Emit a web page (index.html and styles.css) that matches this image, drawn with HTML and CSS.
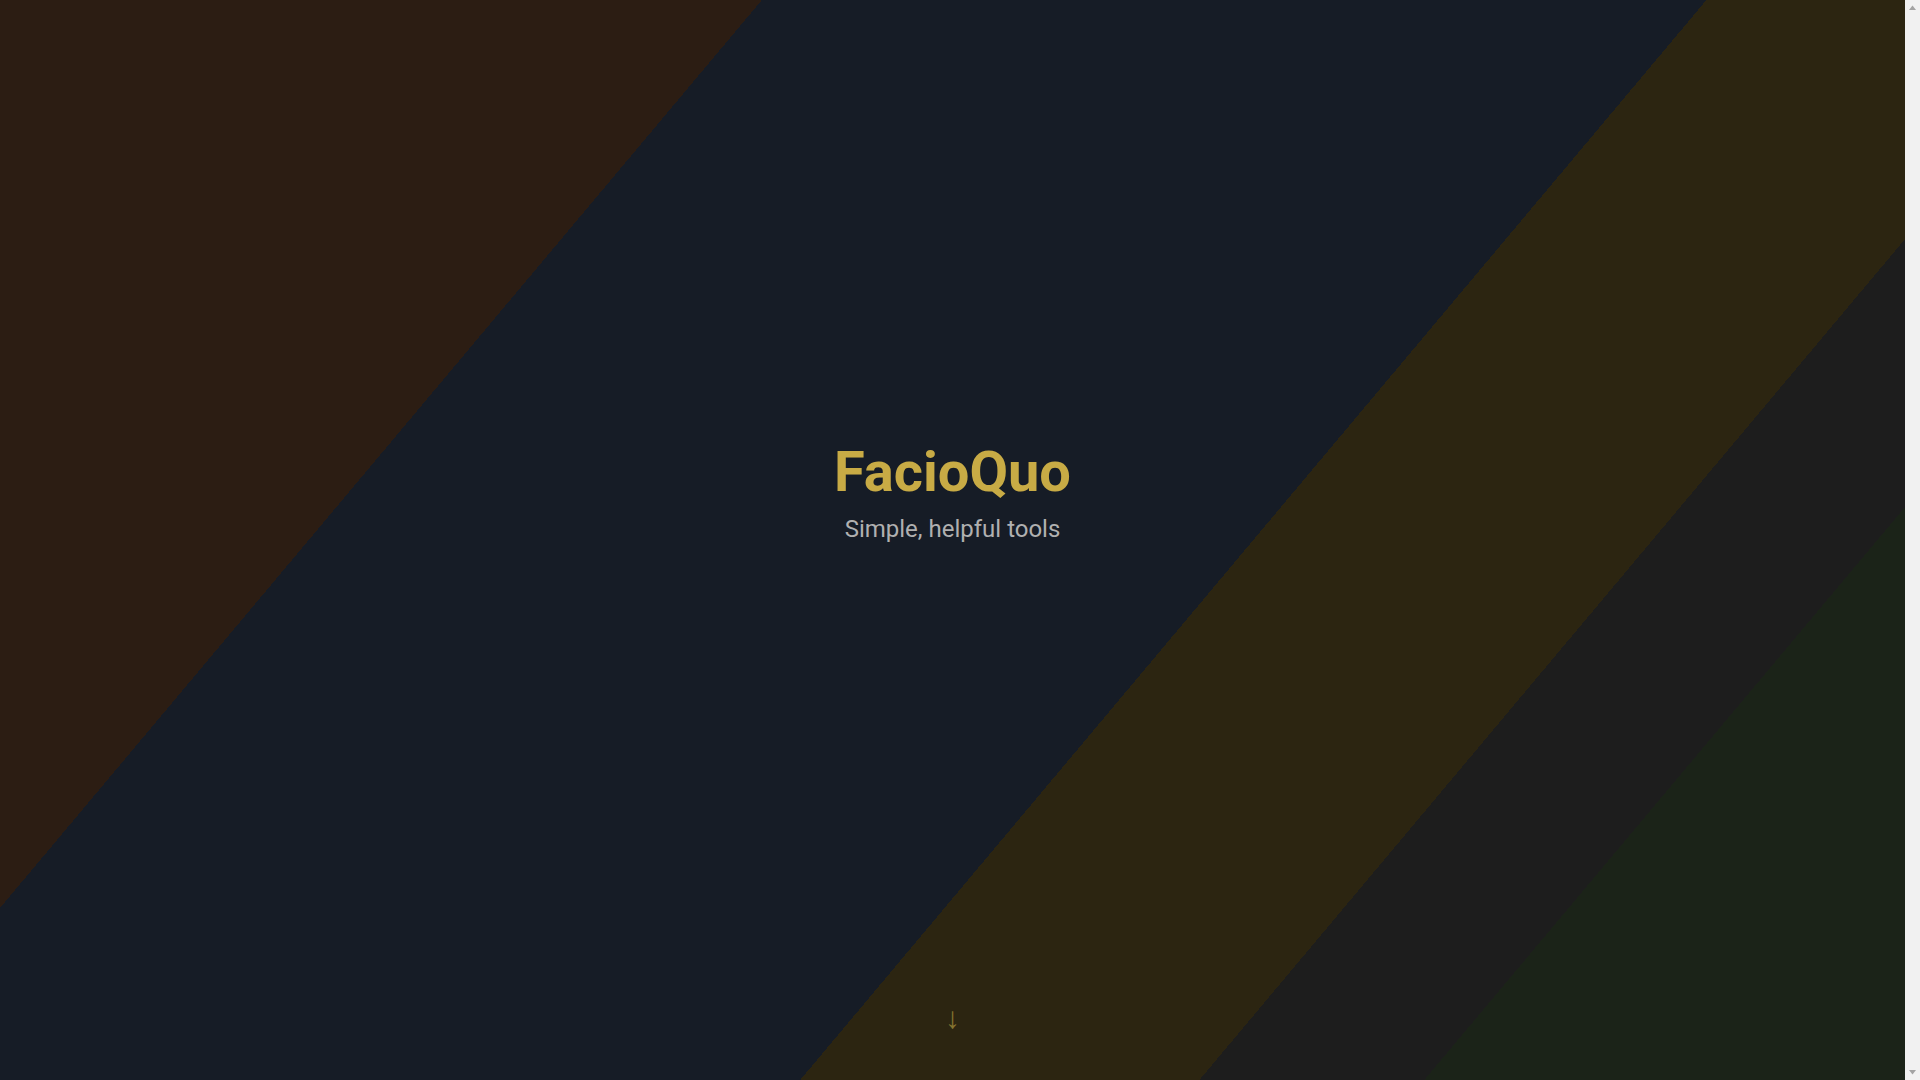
FILE: index.html
```html
<!DOCTYPE html>
<html lang="en">
<head>
<meta charset="utf-8">
<title>FacioQuo</title>
<link rel="stylesheet" href="styles.css">
</head>
<body>
<main class="page">
  <section class="hero">
    <div class="hero-content">
      <h1 class="brand">FacioQuo</h1>
      <p class="tagline">Simple, helpful tools</p>
    </div>
    <div class="scroll-hint">&#8595;</div>
  </section>
</main>
<div class="scrollbar" aria-hidden="true">
  <svg class="sb-btn" viewBox="0 0 15 17" width="15" height="17"><polygon points="7.5,5.5 11,10 4,10" fill="#a3a3a3"/></svg>
  <svg class="sb-btn" viewBox="0 0 15 17" width="15" height="17"><polygon points="4,7 11,7 7.5,11.5" fill="#a3a3a3"/></svg>
</div>
</body>
</html>
```

FILE: styles.css
```css
html, body {
  margin: 0;
  height: 100%;
  overflow: hidden;
}
body {
  display: flex;
  font-family: Roboto, "Liberation Sans", sans-serif;
  background: #161c26;
}
.page {
  flex: 1;
  min-width: 0;
  height: 100vh;
}
.scrollbar {
  width: 15px;
  flex: 0 0 15px;
  height: 100vh;
  background: #f1f1f1;
  display: flex;
  flex-direction: column;
  justify-content: space-between;
}
.sb-btn {
  display: block;
}
.hero {
  height: 100vh;
  display: flex;
  flex-direction: column;
  background: linear-gradient(130deg,
    #2c1d13 0%, #2c1d13 27.1%,
    #161c26 27.1%, #161c26 60.7%,
    #2c2511 60.7%, #2c2511 74.9%,
    #1d1d1d 74.9%, #1d1d1d 82.9%,
    #1b2318 82.9%, #1b2318 100%);
}
.hero-content {
  flex: 1;
  display: flex;
  flex-direction: column;
  align-items: center;
  justify-content: center;
  padding-bottom: 14px;
}
.brand {
  margin: 0;
  font-size: 56px;
  line-height: 1;
  font-weight: 700;
  color: #c8ab45;
}
.tagline {
  margin: 13px 0 0;
  font-size: 24px;
  line-height: 33px;
  color: #b0b0b0;
}
.scroll-hint {
  align-self: center;
  margin-bottom: 47px;
  font-size: 30px;
  line-height: 30px;
  color: #86742f;
}
```
